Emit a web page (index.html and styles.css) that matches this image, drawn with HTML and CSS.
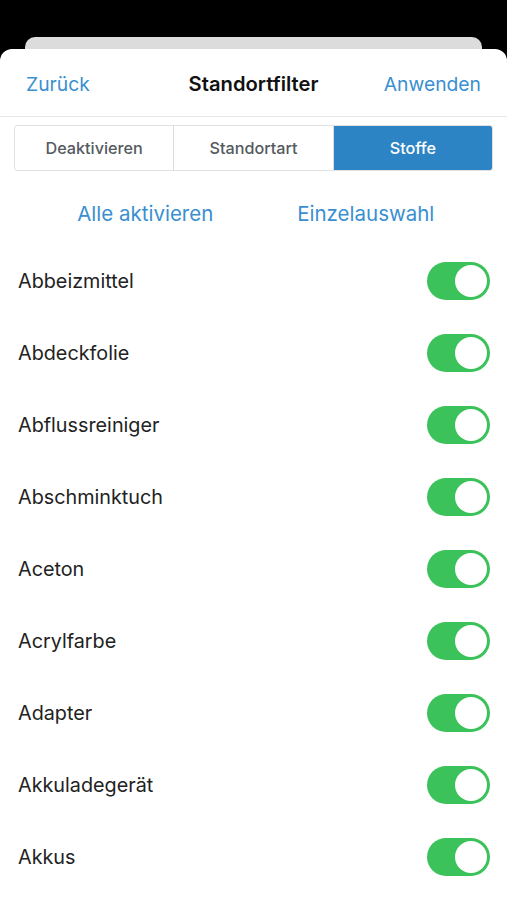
FILE: index.html
```html
<!DOCTYPE html>
<html lang="de">
<head>
<meta charset="utf-8">
<link rel="stylesheet" href="styles.css">
</head>
<body>
<div class="screen">
  <div class="back-card"></div>
  <div class="sheet">
    <header class="nav">
      <span class="nav-btn nav-left">Zurück</span>
      <span class="nav-title">Standortfilter</span>
      <span class="nav-btn nav-right">Anwenden</span>
    </header>
    <div class="segments">
      <div class="seg">Deaktivieren</div>
      <div class="seg">Standortart</div>
      <div class="seg seg-active">Stoffe</div>
    </div>
    <div class="actions">
      <span class="action">Alle aktivieren</span>
      <span class="action">Einzelauswahl</span>
    </div>
    <ul class="list">
      <li class="row"><span class="label">Abbeizmittel</span><span class="toggle"><span class="knob"></span></span></li>
      <li class="row"><span class="label">Abdeckfolie</span><span class="toggle"><span class="knob"></span></span></li>
      <li class="row"><span class="label">Abflussreiniger</span><span class="toggle"><span class="knob"></span></span></li>
      <li class="row"><span class="label">Abschminktuch</span><span class="toggle"><span class="knob"></span></span></li>
      <li class="row"><span class="label">Aceton</span><span class="toggle"><span class="knob"></span></span></li>
      <li class="row"><span class="label">Acrylfarbe</span><span class="toggle"><span class="knob"></span></span></li>
      <li class="row"><span class="label">Adapter</span><span class="toggle"><span class="knob"></span></span></li>
      <li class="row"><span class="label">Akkuladegerät</span><span class="toggle"><span class="knob"></span></span></li>
      <li class="row"><span class="label">Akkus</span><span class="toggle"><span class="knob"></span></span></li>
    </ul>
  </div>
</div>
</body>
</html>
```

FILE: styles.css
```css
* { box-sizing: border-box; }
html, body { margin: 0; padding: 0; background: #000; }
body { font-family: Inter, Roboto, "Liberation Sans", sans-serif; }
.screen { width: 507px; height: 900px; overflow: hidden; padding-top: 37px; }
.back-card {
  margin: 0 25px;
  height: 20px;
  background: #dcdcdc;
  border-radius: 10px 10px 0 0;
}
.sheet {
  margin-top: -8px;
  background: #fff;
  border-radius: 12px 12px 0 0;
  height: 900px;
}
.nav {
  display: grid;
  grid-template-columns: 1fr auto 1fr;
  align-items: center;
  height: 68px;
  padding: 2px 26px 0 26px;
  border-bottom: 1px solid #e6e6e6;
}
.nav-btn { color: #3a8fd0; font-size: 19.3px; }
.nav-left { justify-self: start; }
.nav-right { justify-self: end; }
.nav-title { color: #111; font-size: 20.2px; font-weight: 600; }
.segments {
  display: flex;
  margin: 8px 14px 0 14px;
  height: 46px;
  border: 1px solid #e2e2e2;
  border-radius: 3px;
  overflow: hidden;
}
.seg {
  flex: 1;
  display: flex;
  align-items: center;
  justify-content: center;
  font-size: 16.2px;
  font-weight: 500;
  color: #555a60;
  border-right: 1px solid #dcdcdc;
}
.seg:last-child { border-right: none; }
.seg-active { background: #2d84c4; color: #fff; }
.actions {
  display: grid;
  grid-template-columns: 1fr 1fr;
  padding: 10px 31px 0 35px;
  height: 74px;
  align-items: center;
}
.action { color: #3a8fd0; font-size: 20.5px; text-align: center; }
.list { list-style: none; margin: 0; padding: 0; }
.row {
  display: flex;
  justify-content: space-between;
  align-items: center;
  height: 72px;
  padding: 0 17px 0 18px;
}
.label { font-size: 19.8px; color: #222; }
.toggle {
  width: 63px;
  height: 38px;
  border-radius: 19px;
  background: #3cc25a;
  display: flex;
  justify-content: flex-end;
  padding: 1px;
}
.knob {
  width: 36px;
  height: 36px;
  border-radius: 50%;
  background: #fff;
  border: 2px solid #3cc25a;
}
```
